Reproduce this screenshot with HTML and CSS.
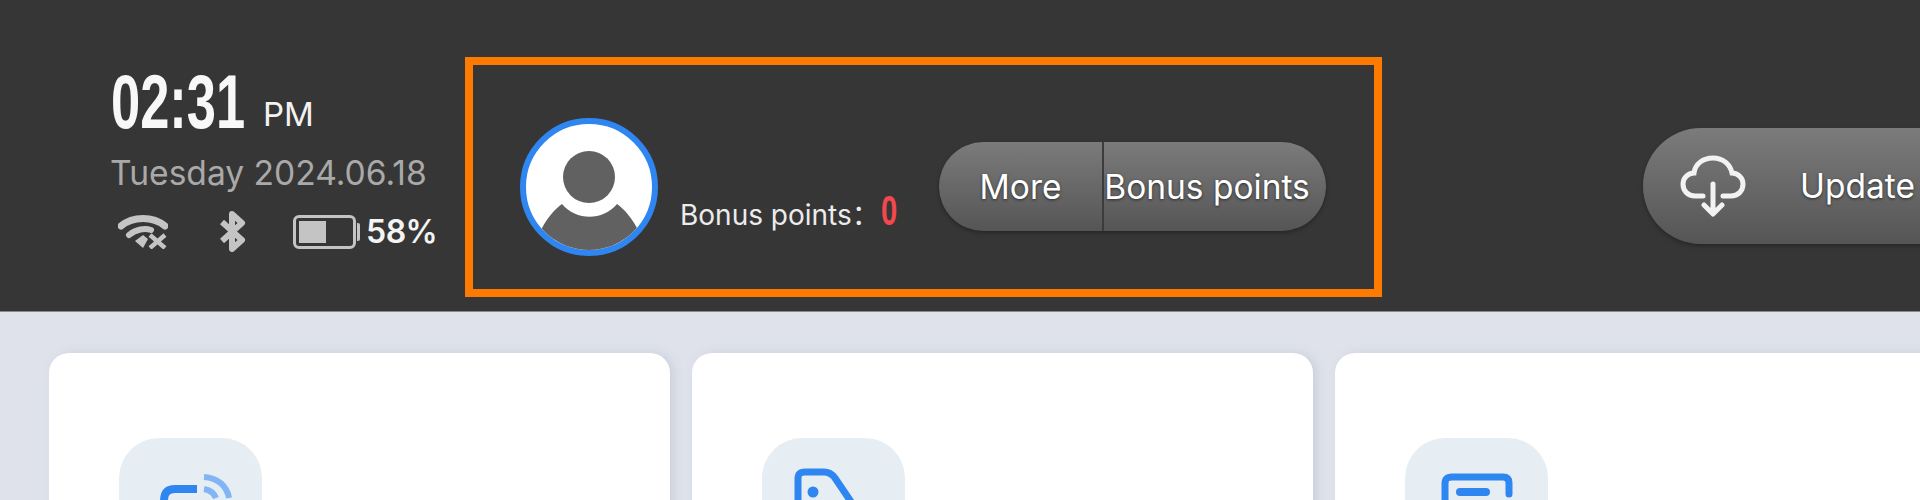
FILE: index.html
```html
<!DOCTYPE html>
<html lang="en">
<head>
  <meta charset="UTF-8">
  <meta name="viewport" content="width=device-width, initial-scale=1.0">
  <title>Home</title>
  <link rel="stylesheet" href="styles.css">
</head>
<body>

<div class="header">
  <div class="status">
    <div class="clock">
      <span class="time">02:31</span>
      <span class="ampm">PM</span>
    </div>
    <div class="date">Tuesday 2024.06.18</div>
    <div class="status-icons">
      <svg class="icon-wifi" width="50" height="34" viewBox="0 0 50 34">
        <path d="M3 11C15 1 35 1 47 11" fill="none" stroke="#c4c4c4" stroke-width="7" stroke-linecap="round"/>
        <path d="M11 20C18 14 27 13 33 15" fill="none" stroke="#c4c4c4" stroke-width="6" stroke-linecap="round"/>
        <path d="M17 26L25 20L30 24L25 33Z" fill="#c4c4c4"/>
        <path d="M32 20L47 33M47 20L32 33" fill="none" stroke="#c4c4c4" stroke-width="4.5"/>
      </svg>
      <svg class="icon-bt" width="26" height="41" viewBox="0 0 26 41">
        <path d="M2 11L22 29L12 38V3L22 12L2 30" fill="none" stroke="#c4c4c4" stroke-width="6" stroke-linejoin="round"/>
      </svg>
      <div class="battery"><div class="battery-level"></div></div>
      <span class="battery-text">58%</span>
    </div>
  </div>

  <div class="highlight">
    <div class="avatar">
      <svg width="126" height="126" viewBox="0 0 126 126">
        <circle cx="63" cy="53" r="26" fill="#616161"/>
        <path d="M16 104C22 93 28 86 36 80C50 97 77 97 91 80C99 86 105 93 111 104L100 140H20Z" fill="#616161"/>
      </svg>
    </div>
    <div class="bonus">Bonus points：<span class="bonus-value">0</span></div>
    <div class="pill">
      <div class="pill-item pill-more">More</div>
      <div class="pill-item pill-bonus">Bonus points</div>
    </div>
  </div>

  <div class="update">
    <svg width="66" height="62" viewBox="0 0 66 62">
      <path d="M23 41H15C8 41 3 36 3 29C3 23 8 18 14 18C15 9 23 3 33 3C43 3 50 9 52 18C58 18 63 23 63 29C63 36 58 41 51 41H43" fill="none" stroke="#f2f2f2" stroke-width="5" stroke-linecap="round"/>
      <path d="M33 29V58M24 50L33 59L42 50" fill="none" stroke="#f2f2f2" stroke-width="5" stroke-linecap="round" stroke-linejoin="round"/>
    </svg>
    <span class="update-text">Update</span>
  </div>
</div>

<div class="cards">
  <div class="card">
    <div class="tile">
      <svg width="143" height="143" viewBox="0 0 143 143">
        <path d="M78 51H56C48 51 45 55 45 63V110" fill="none" stroke="#2f86f0" stroke-width="8"/>
        <path d="M85 39C99 40 108 48 110 60" fill="none" stroke="#82b5f5" stroke-width="6"/>
        <path d="M85 51C91 52 95 55 97 60" fill="none" stroke="#82b5f5" stroke-width="6"/>
      </svg>
    </div>
  </div>
  <div class="card">
    <div class="tile">
      <svg width="143" height="143" viewBox="0 0 143 143">
        <path d="M36 110V41C36 36 38 34 43 34H62C67 34 70 36 73 40L100 80" fill="none" stroke="#2f86f0" stroke-width="7"/>
        <circle cx="51" cy="54" r="5.5" fill="#2f86f0"/>
      </svg>
    </div>
  </div>
  <div class="card">
    <div class="tile">
      <svg width="143" height="143" viewBox="0 0 143 143">
        <path d="M40 110V46C40 41 42 39 47 39H98C102 39 104 41 104 45V56" fill="none" stroke="#2f86f0" stroke-width="7" stroke-linecap="round"/>
        <path d="M55 54H81" fill="none" stroke="#2f86f0" stroke-width="8" stroke-linecap="round"/>
        <circle cx="93" cy="70" r="5" fill="#2f86f0"/>
      </svg>
    </div>
  </div>
</div>

</body>
</html>
```

FILE: styles.css
```css
html, body {
  margin: 0;
  padding: 0;
  height: 500px;
  overflow: hidden;
}
body {
  font-family: 'Inter', 'Noto Sans CJK SC', sans-serif;
  background: #dfe2eb;
}
.header {
  display: flex;
  align-items: flex-start;
  height: 311px;
  padding-left: 110px;
  background: #363636;
  border-bottom: 1px solid #8a8a8a;
}
.status {
  flex: none;
  width: 355px;
  padding-top: 71px;
}
.clock {
  display: flex;
  align-items: flex-end;
  height: 62px;
}
.time {
  display: block;
  width: 152px;
  margin-left: 1px;
  font-family: 'Liberation Sans', sans-serif;
  font-size: 76px;
  font-weight: bold;
  line-height: 62px;
  color: #f8f8f8;
  transform: scaleX(0.69);
  transform-origin: left center;
}
.ampm {
  font-size: 33px;
  line-height: 38px;
  color: #f2f2f2;
}
.date {
  margin-top: 20px;
  font-size: 33.6px;
  line-height: 40px;
  color: #a9a9a9;
}
.status-icons {
  display: flex;
  align-items: center;
  margin-top: 18px;
  padding-left: 8px;
}
.icon-bt {
  margin-left: 52px;
}
.battery {
  position: relative;
  box-sizing: border-box;
  width: 63px;
  height: 34px;
  margin-left: 47px;
  padding: 3px;
  border: 3px solid #c4c4c4;
  border-radius: 6px;
}
/* battery nub */
.battery::after {
  content: "";
  position: absolute;
  right: -7px;
  top: 5px;
  width: 3px;
  height: 18px;
  background: #c4c4c4;
  border-radius: 0 2px 2px 0;
}
.battery-level {
  width: 27px;
  height: 100%;
  background: #c4c4c4;
}
.battery-text {
  margin-left: 10px;
  font-size: 32px;
  font-weight: 600;
  letter-spacing: -0.5px;
  color: #f4f4f4;
}
.highlight {
  flex: none;
  display: flex;
  align-items: center;
  box-sizing: border-box;
  width: 917px;
  height: 240px;
  margin-top: 57px;
  padding: 44px 0 25px 47px;
  border: 8px solid #ff7a00;
}
.avatar {
  flex: none;
  display: flex;
  box-sizing: border-box;
  width: 138px;
  height: 138px;
  border: 6px solid #2f86f0;
  border-radius: 50%;
  background: #fff;
  overflow: hidden;
}
.bonus {
  flex: none;
  align-self: flex-end;
  width: 217px;
  margin: 0 0 31px 22px;
  font-size: 28px;
  line-height: 36px;
  white-space: nowrap;
  color: #ececec;
}
.bonus-value {
  display: inline-block;
  width: 16px;
  margin-left: 1px;
  font-family: 'Liberation Sans', sans-serif;
  font-size: 43px;
  font-weight: bold;
  line-height: 36px;
  color: #f4484c;
  transform: scaleX(0.68);
  transform-origin: left center;
}
.pill {
  flex: none;
  display: flex;
  width: 387px;
  height: 89px;
  margin-left: 42px;
  border-radius: 45px;
  background: linear-gradient(#7b7b7b, #555);
  box-shadow: 0 2px 4px rgba(0, 0, 0, 0.3);
  font-size: 33.5px;
  color: #fff;
  text-shadow: 0 1px 3px rgba(0, 0, 0, 0.6);
}
.pill-item {
  display: flex;
  align-items: center;
  justify-content: center;
}
.pill-more {
  width: 163px;
  border-right: 2px solid #3c3c3c;
}
.pill-bonus {
  width: 222px;
  padding-right: 16px;
  box-sizing: border-box;
}
.update {
  flex: none;
  display: flex;
  align-items: center;
  width: 340px;
  height: 116px;
  margin: 128px 0 0 261px;
  padding-left: 37px;
  box-sizing: border-box;
  border-radius: 58px;
  background: linear-gradient(#7b7b7b, #555);
  box-shadow: 0 2px 4px rgba(0, 0, 0, 0.3);
  color: #fff;
}
.update-text {
  margin-left: 54px;
  font-size: 33.5px;
  text-shadow: 0 1px 3px rgba(0, 0, 0, 0.6);
}
.cards {
  display: flex;
  gap: 22px;
  height: 188px;
  box-sizing: border-box;
  padding: 41px 0 0 49px;
  overflow: hidden;
}
.card {
  flex: none;
  box-sizing: border-box;
  width: 621px;
  height: 300px;
  padding: 85px 0 0 70px;
  background: #fff;
  border-radius: 20px;
  box-shadow: 4px 0 10px rgba(170, 178, 195, 0.35);
}
.tile {
  width: 143px;
  height: 143px;
  background: #e7eef3;
  border-radius: 40px;
}
```
